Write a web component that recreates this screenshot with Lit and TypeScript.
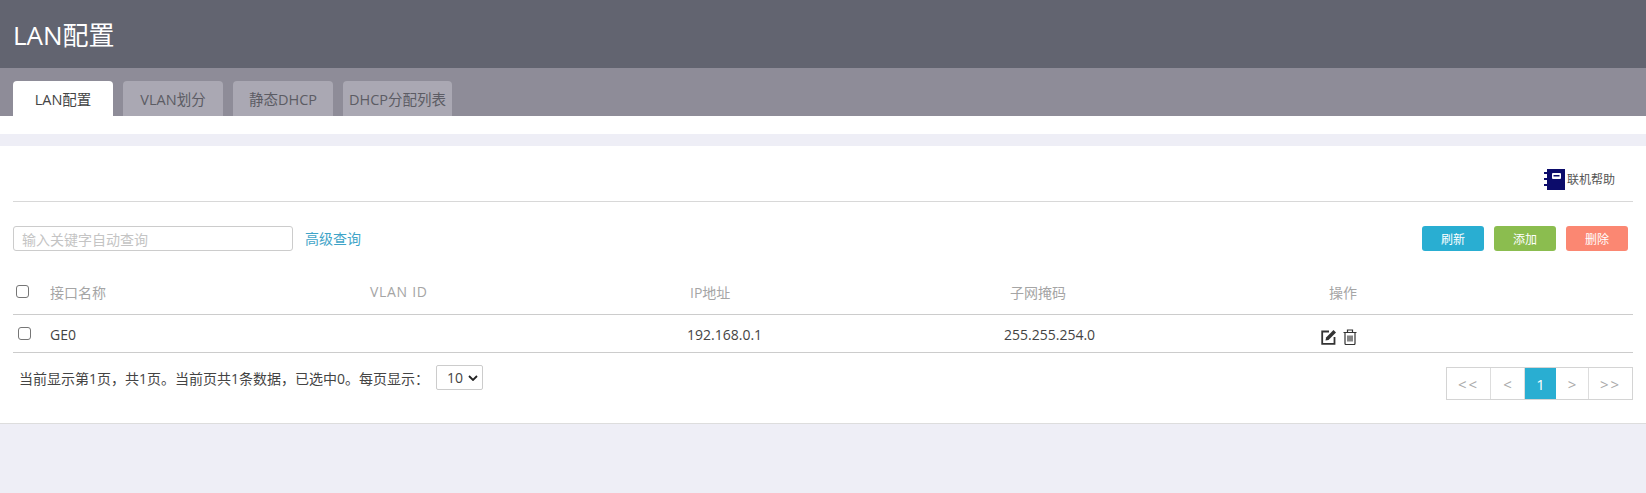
import { LitElement, html, css } from "lit";
import { customElement } from "lit/decorators.js";

@customElement("app-root")
export class AppRoot extends LitElement {
  static styles = css`
    :host { display: block; min-height: 493px; background: #eeeef6; font-family: "Open Sans", "Noto Sans CJK SC", sans-serif; color: #444; }
    .head { height: 68px; background: #626470; color: #fff; font-size: 26px; display: flex; align-items: center; padding-left: 13px; box-sizing: border-box; }
    .tabs { height: 48px; background: #8e8c98; display: flex; align-items: flex-end; gap: 10px; padding-left: 13px; box-sizing: border-box; }
    .tab { height: 35px; width: 100px; background: #aaa8b3; color: #5c5c64; border-radius: 4px 4px 0 0; font-size: 14.5px; display: flex; align-items: center; justify-content: center; white-space: nowrap; }
    .tab.on { background: #fff; color: #444; }
    .tab.wide { width: 109px; }
    .strip { height: 18px; background: #fff; }
    .card { margin-top: 12px; height: 278px; background: #fff; border-bottom: 1px solid #ddd; box-sizing: border-box; padding: 0 13px; }
    .help { height: 56px; width: 1620px; border-bottom: 1px solid #d8d8d8; display: flex; justify-content: flex-end; align-items: center; box-sizing: border-box; padding: 11px 18px 0 0; font-size: 12px; gap: 2px; color: #555; }
    .tools { display: flex; align-items: center; height: 25px; margin-top: 24px; }
    .search { width: 280px; height: 25px; border: 1px solid #ccc; border-radius: 3px; box-sizing: border-box; font-size: 14px; color: #c4c4c4; padding-left: 8px; display: flex; align-items: center; }
    .adv { margin-left: 12px; color: #3fa4c8; font-size: 14px; padding-bottom: 2px; }
    .btns { margin-left: auto; margin-right: 5px; display: flex; gap: 10px; }
    .btn { width: 62px; height: 25px; border-radius: 3px; color: #fff; font-size: 12px; display: flex; align-items: center; justify-content: center; }
    .b1 { background: #29aed2; } .b2 { background: #8bbd4f; } .b3 { background: #fb8772; }
    .table { width: 1620px; margin-top: 13px; }
    .row { display: grid; align-items: center; font-size: 14px; box-sizing: border-box; border-bottom: 1px solid #ccc; }
    .row.hd { height: 51px; color: #a5a5a5; padding-top: 5px; grid-template-columns: 37px 320px 320px 320px 319px 1fr; }
    .row.bd { height: 38px; color: #444; padding-top: 2px; grid-template-columns: 37px 320px 317px 317px 317px 1fr; }
    .spaced { letter-spacing: 0.7px; }
    .box { width: 13px; height: 13px; border: 1px solid #767676; border-radius: 3px; box-sizing: border-box; margin-left: 3px; }
    .bd .box { margin-left: 5px; margin-bottom: 2px; }
    .ops { display: flex; gap: 6px; align-items: center; padding-top: 4px; }
    .foot { display: flex; justify-content: space-between; width: 1620px; }
    .info { display: flex; align-items: center; font-size: 14px; height: 25px; margin: 12px 0 0 6px; color: #444; gap: 7px; }
    .sel { width: 47px; height: 25px; border: 1px solid #ccc; border-radius: 2px; box-sizing: border-box; display: flex; align-items: center; justify-content: space-between; padding: 0 4px 0 10px; font-size: 14px; }
    .pager { display: flex; margin-top: 14px; height: 33px; border: 1px solid #d4d4d4; box-sizing: border-box; color: #aaa; font-size: 15px; }
    .pager span { display: flex; align-items: center; justify-content: center; border-right: 1px solid #ddd; box-sizing: border-box; }
    .pager span:last-child { border-right: 0; }
    .pager .cur { background: #29aed2; color: #fff; border-right: 0; }
    .p1 { width: 44px; letter-spacing: 2px; } .p2 { width: 34px; } .pager .cur { width: 31px; } .p4 { width: 33px; } .p5 { width: 43px; letter-spacing: 2px; }
  `;

  render() {
    return html`
      <div class="head">LAN配置</div>
      <div class="tabs">
        <div class="tab on">LAN配置</div>
        <div class="tab">VLAN划分</div>
        <div class="tab">静态DHCP</div>
        <div class="tab wide">DHCP分配列表</div>
      </div>
      <div class="strip"></div>
      <div class="card">
        <div class="help">
          <svg width="21" height="21" viewBox="0 0 21 21">
            <rect x="3" y="0" width="18" height="21" fill="#0c0c6b"/>
            <rect x="8" y="4" width="9" height="6" rx="1" fill="#fff"/>
            <rect x="9.5" y="6" width="6" height="1.5" fill="#0c0c6b"/>
            <path d="M0 4h4M0 10h4M0 16h4" stroke="#0c0c6b" stroke-width="2" fill="none"/>
          </svg>
          <span>联机帮助</span>
        </div>
        <div class="tools">
          <div class="search">输入关键字自动查询</div>
          <div class="adv">高级查询</div>
          <div class="btns">
            <div class="btn b1">刷新</div>
            <div class="btn b2">添加</div>
            <div class="btn b3">删除</div>
          </div>
        </div>
        <div class="table">
          <div class="row hd">
            <div><div class="box"></div></div>
            <div>接口名称</div>
            <div class="spaced">VLAN ID</div>
            <div>IP地址</div>
            <div>子网掩码</div>
            <div>操作</div>
          </div>
          <div class="row bd">
            <div><div class="box"></div></div>
            <div>GE0</div>
            <div></div>
            <div>192.168.0.1</div>
            <div>255.255.254.0</div>
            <div class="ops">
              <svg width="16" height="16" viewBox="0 0 16 16">
                <path d="M8 2.5H1.2v12.3H13.5V8" fill="none" stroke="#333" stroke-width="1.8"/>
                <path d="M4.5 11.5l.6-3L12.5 1l2.5 2.5L7.5 11z" fill="#333"/>
              </svg>
              <svg width="14" height="16" viewBox="0 0 14 16">
                <path d="M.5 3.5h13M4.5 3V1h5v2M2 4v10.5a1 1 0 0 0 1 1h8a1 1 0 0 0 1-1V4M5 6.5v6M7 6.5v6M9 6.5v6" fill="none" stroke="#333" stroke-width="1.2"/>
              </svg>
            </div>
          </div>
        </div>
        <div class="foot">
          <div class="info">
            <span>当前显示第1页，共1页。当前页共1条数据，已选中0。每页显示：</span>
            <div class="sel">10
              <svg width="10" height="6" viewBox="0 0 10 6"><path d="M1 1l4 4 4-4" fill="none" stroke="#222" stroke-width="1.8"/></svg>
            </div>
          </div>
          <div class="pager">
            <span class="p1">&lt;&lt;</span>
            <span class="p2">&lt;</span>
            <span class="cur">1</span>
            <span class="p4">&gt;</span>
            <span class="p5">&gt;&gt;</span>
          </div>
        </div>
      </div>
    `;
  }
}
